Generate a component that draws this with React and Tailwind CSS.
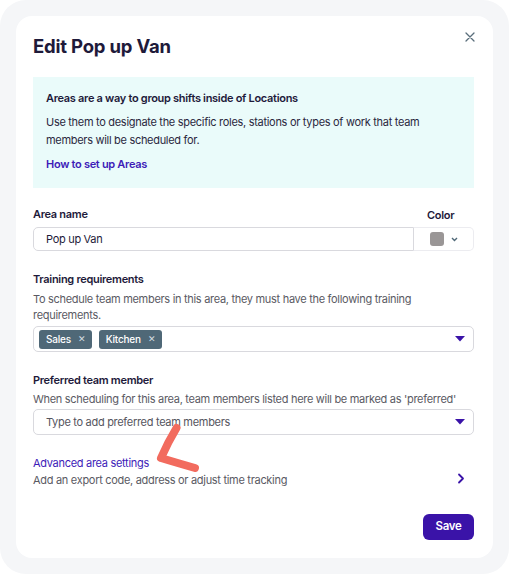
import { useState } from 'react';

const Tag = ({ label }) => (
    <span className="inline-flex items-center gap-[7px] h-[19px] pl-[7px] pr-[6px] rounded-[3px] bg-[#4f6877] text-white text-[10px] font-medium tracking-[-0.2px]">
        {label}
        <span className="text-[8.5px] text-[#d5dde2] leading-none">✕</span>
    </span>
);

const Caret = () => (
    <svg width="10" height="6" viewBox="0 0 10 6" className="shrink-0">
        <path d="M0 0 H10 L5 5.5 Z" fill="#3a13a8" />
    </svg>
);

const App = () => {
    const [name, setName] = useState('Pop up Van');

    return (
        <div className="w-[509px] h-[574px] bg-white font-['Inter',sans-serif] text-[#1e1a3a] text-[11px] tracking-[-0.3px]">
            <div className="relative w-full h-full rounded-[26px] bg-[#f5f6f8] p-[16px]">
                <div className="relative h-full rounded-[16px] bg-white pl-[17px] pr-[19px] pt-[13px]">
                    <div className="flex items-start justify-between">
                        <h1 className="text-[18.5px] font-bold leading-[34px] tracking-[-0.2px]">Edit Pop up Van</h1>
                        <button className="mt-[1px] mr-[-3px] p-[2px] text-[#5a6e7b]">
                            <svg width="10" height="10" viewBox="0 0 10 10">
                                <path d="M1 1 L9 9 M9 1 L1 9" stroke="currentColor" strokeWidth="1.3" strokeLinecap="round" />
                            </svg>
                        </button>
                    </div>

                    <div className="mt-[14px] bg-[#eafbfa] px-[13px] pt-[12px] pb-[15px]">
                        <p className="font-semibold leading-[18px]">Areas are a way to group shifts inside of Locations</p>
                        <p className="mt-[6px] leading-[18px] text-[#2a2840]">
                            Use them to designate the specific roles, stations or types of work that team members will be scheduled for.
                        </p>
                        <a className="block mt-[6px] font-semibold leading-[18px] text-[#3d1cb8]">How to set up Areas</a>
                    </div>

                    <div className="mt-[17px] flex">
                        <div className="flex-1">
                            <label className="block font-semibold leading-[18px]">Area name</label>
                            <input
                                value={name}
                                onChange={(e) => setName(e.target.value)}
                                className="mt-[4px] w-full h-[24px] rounded-l-[5px] border border-[#d9d9de] px-[12px] text-[#1e1a3a] outline-none"
                            />
                        </div>
                        <div className="w-[60px]">
                            <label className="block font-semibold leading-[18px] pl-[13px] pt-[1px]">Color</label>
                            <div className="mt-[3px] h-[24px] flex items-center justify-center gap-[7px] rounded-r-[5px] border border-l-0 border-[#ececf0]">
                                <span className="w-[14px] h-[14px] rounded-[3px] bg-[#9a9696]" />
                                <svg width="7" height="5" viewBox="0 0 7 5">
                                    <path d="M1 1 L3.5 3.5 L6 1" stroke="#4f6877" strokeWidth="1.4" fill="none" />
                                </svg>
                            </div>
                        </div>
                    </div>

                    <div className="mt-[19px]">
                        <label className="block font-semibold leading-[18px]">Training requirements</label>
                        <p className="mt-[3px] leading-[16px] text-[#5a5a63]">
                            To schedule team members in this area, they must have the following training requirements.
                        </p>
                        <div className="mt-[3px] h-[26px] flex items-center rounded-[5px] border border-[#d9d9de] pl-[5px] pr-[8px]">
                            <div className="flex gap-[7px] flex-1">
                                <Tag label="Sales" />
                                <Tag label="Kitchen" />
                            </div>
                            <Caret />
                        </div>
                    </div>

                    <div className="mt-[19px]">
                        <label className="block font-semibold leading-[18px]">Preferred team member</label>
                        <p className="mt-[2px] leading-[16px] text-[#5a5a63]">
                            When scheduling for this area, team members listed here will be marked as 'preferred'
                        </p>
                        <div className="mt-[2px] h-[26px] flex items-center rounded-[5px] border border-[#d9d9de] pl-[12px] pr-[8px]">
                            <span className="flex-1 text-[#55555e]">Type to add preferred team members</span>
                            <Caret />
                        </div>
                    </div>

                    <div className="mt-[19px] flex items-center justify-between">
                        <div>
                            <a className="block leading-[18px] text-[#3d1cb8]">Advanced area settings</a>
                            <p className="leading-[16px] text-[#5a5a63]">Add an export code, address or adjust time tracking</p>
                        </div>
                        <svg width="8" height="11" viewBox="0 0 8 11" className="mr-[9px] mt-[14px]">
                            <path d="M2 1.5 L6 5.5 L2 9.5" stroke="#3a13a8" strokeWidth="1.8" fill="none" strokeLinecap="round" strokeLinejoin="round" />
                        </svg>
                    </div>

                    <div className="mt-[26px] flex justify-end">
                        <button className="h-[26px] w-[51px] rounded-[6px] bg-[#3a13a8] text-white text-[11.5px] font-semibold">Save</button>
                    </div>
                </div>

                <svg className="absolute left-[150px] top-[420px] pointer-events-none" width="60" height="60" viewBox="0 0 60 60">
                    <path d="M26.5 8 Q18 22 11 38 Q24 42 45 48" stroke="#f26b5e" strokeWidth="8" fill="none" strokeLinecap="round" strokeLinejoin="round" />
                </svg>
            </div>
        </div>
    );
};

export default App;
